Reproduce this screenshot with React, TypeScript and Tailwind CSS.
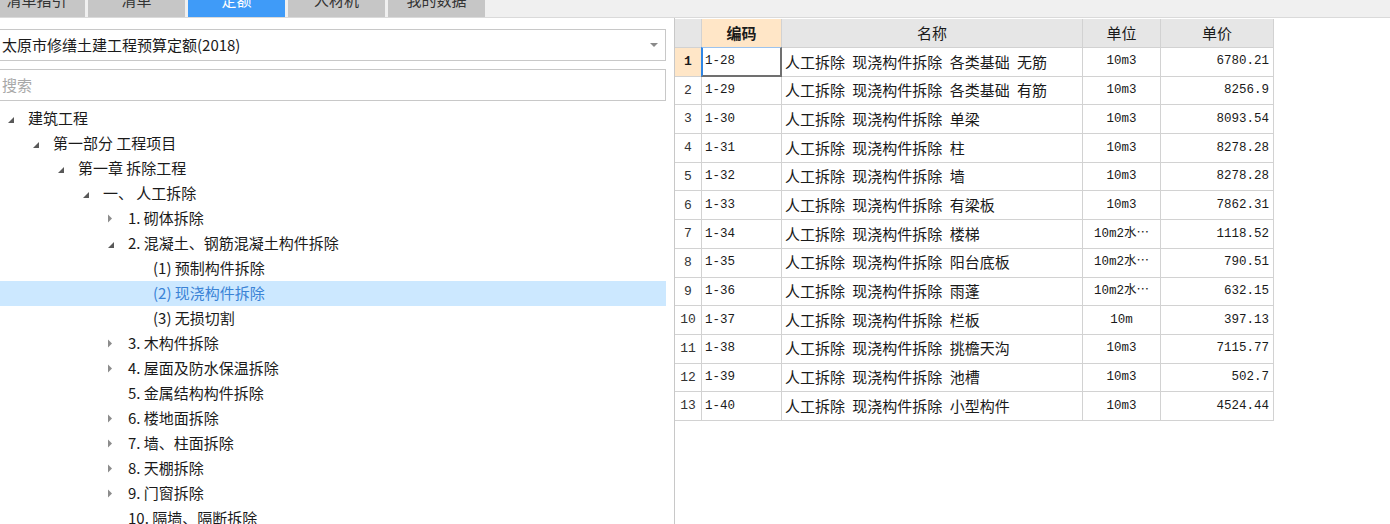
import React from "react";

type Node = { l: number; t: string; s?: "e" | "c"; sel?: boolean };

const tree: Node[] = [
  { l: 0, t: "建筑工程", s: "e" },
  { l: 1, t: "第一部分 工程项目", s: "e" },
  { l: 2, t: "第一章 拆除工程", s: "e" },
  { l: 3, t: "一、 人工拆除", s: "e" },
  { l: 4, t: "1. 砌体拆除", s: "c" },
  { l: 4, t: "2. 混凝土、钢筋混凝土构件拆除", s: "e" },
  { l: 5, t: "(1) 预制构件拆除" },
  { l: 5, t: "(2) 现浇构件拆除", sel: true },
  { l: 5, t: "(3) 无损切割" },
  { l: 4, t: "3. 木构件拆除", s: "c" },
  { l: 4, t: "4. 屋面及防水保温拆除", s: "c" },
  { l: 4, t: "5. 金属结构构件拆除" },
  { l: 4, t: "6. 楼地面拆除", s: "c" },
  { l: 4, t: "7. 墙、柱面拆除", s: "c" },
  { l: 4, t: "8. 天棚拆除", s: "c" },
  { l: 4, t: "9. 门窗拆除", s: "c" },
  { l: 4, t: "10. 隔墙、隔断拆除" },
];

const rows: [string, string, string, string][] = [
  ["1-28", "各类基础 无筋", "10m3", "6780.21"],
  ["1-29", "各类基础 有筋", "10m3", "8256.9"],
  ["1-30", "单梁", "10m3", "8093.54"],
  ["1-31", "柱", "10m3", "8278.28"],
  ["1-32", "墙", "10m3", "8278.28"],
  ["1-33", "有梁板", "10m3", "7862.31"],
  ["1-34", "楼梯", "10m2水⋯", "1118.52"],
  ["1-35", "阳台底板", "10m2水⋯", "790.51"],
  ["1-36", "雨蓬", "10m2水⋯", "632.15"],
  ["1-37", "栏板", "10m", "397.13"],
  ["1-38", "挑檐天沟", "10m3", "7115.77"],
  ["1-39", "池槽", "10m3", "502.7"],
  ["1-40", "小型构件", "10m3", "4524.44"],
];

const cjk = "font-['Microsoft_YaHei','Noto_Sans_CJK_SC',sans-serif]";
const mono = "font-['Liberation_Mono','Noto_Sans_CJK_SC',monospace]";

function Tri({ s }: { s?: "e" | "c" }) {
  if (s === "e")
    return (
      <svg width="8" height="8" viewBox="0 0 8 8" className="absolute left-[7px] top-[11px]">
        <polygon points="7,0 7,6 1,6" fill="#595959" />
      </svg>
    );
  if (s === "c")
    return (
      <svg width="6" height="9" viewBox="0 0 6 9" className="absolute left-[7px] top-[8px]">
        <polygon points="1,0.5 5,4.5 1,8.5" fill="#8c8c8c" />
      </svg>
    );
  return null;
}

const tabs = ["清单指引", "清单", "定额", "人材机", "我的数据"];

export default function App() {
  return (
    <div className={`w-[1390px] h-[524px] overflow-hidden bg-white ${cjk} text-[#1a1a1a]`}>
      {/* tab bar */}
      <div className="h-[18px] bg-[#f0f0f0] border-b border-[#dadada] overflow-hidden flex items-end gap-[3px] pl-0">
        {tabs.map((t, i) => (
          <div
            key={t}
            className={`h-[33px] w-[97px] shrink-0 flex items-center justify-center text-[15px] ${
              i === 0 ? "-ml-[12px]" : ""
            } ${i === 2 ? "bg-[#3f9bf8] text-white" : "bg-[#c6c6c6] text-[#333]"}`}
          >
            {t}
          </div>
        ))}
      </div>

      <div className="flex h-[506px] overflow-hidden">
        {/* left panel */}
        <div className="w-[674px] shrink-0 pt-[11px] flex flex-col">
          <div className="shrink-0 w-[666px] h-[32px] border border-l-0 border-[#c8c8c8] flex items-center justify-between pl-[2px] pr-[7px] text-[15px]">
            <span>太原市修缮土建工程预算定额(2018)</span>
            <svg width="8" height="5" viewBox="0 0 8 5">
              <polygon points="0,0 8,0 4,4" fill="#8a8a8a" />
            </svg>
          </div>
          <div className="shrink-0 mt-[8px] w-[666px] h-[32px] border border-l-0 border-[#c8c8c8] flex items-center pl-[2px] text-[15px] text-[#a8a8a8]">
            搜索
          </div>
          <div className="shrink-0 mt-[5px] w-[666px]">
            {tree.map((n, i) => (
              <div
                key={i}
                className={`h-[25px] flex items-center text-[15px] whitespace-nowrap ${
                  n.sel ? "bg-[#cce8ff] text-[#3a83d6]" : ""
                }`}
              >
                <div style={{ width: 25 * n.l }} className="shrink-0" />
                <div className="relative w-[28px] h-[25px] shrink-0">
                  <Tri s={n.s} />
                </div>
                <span>{n.t}</span>
              </div>
            ))}
          </div>
        </div>

        {/* right panel */}
        <div className="flex-1 border-l border-[#c8c8c8] pt-[1px]">
          <div className="w-[599px] text-[#1a1a1a]">
            {/* header */}
            <div className="flex h-[29px] text-[15px]">
              <div className="w-[27px] bg-[#e6e6e6] border-r border-b border-[#d2d2d2]" />
              <div className="w-[80px] bg-[#ffe6c7] border-r border-b border-[#d2d2d2] flex items-center justify-center font-bold">
                编码
              </div>
              <div className="w-[301px] bg-[#e6e6e6] border-r border-b border-[#d2d2d2] flex items-center justify-center">
                名称
              </div>
              <div className="w-[78px] bg-[#e6e6e6] border-r border-b border-[#d2d2d2] flex items-center justify-center">
                单位
              </div>
              <div className="w-[113px] bg-[#e6e6e6] border-r border-b border-[#d2d2d2] flex items-center justify-center">
                单价
              </div>
            </div>
            {rows.map((r, i) => (
              <div key={i} className="flex h-[28.7px]">
                <div
                  className={`w-[27px] border-r border-b border-[#d2d2d2] flex items-center justify-center text-[13px] ${mono} ${
                    i === 0 ? "bg-[#ffe6c7] font-bold" : "text-[#333]"
                  }`}
                >
                  {i + 1}
                </div>
                <div className={`relative w-[80px] border-r border-b border-[#d2d2d2] flex items-center pl-[3px] text-[12.5px] ${mono}`}>
                  {r[0]}
                  {i === 0 && (
                    <div className="absolute left-[-1px] top-[-1px] right-[-1px] bottom-[-1px] border-l-2 border-t border-r-2 border-b-2 border-l-[#2f86e6] border-t-[#9cc3ee] border-r-[#707070] border-b-[#707070]" />
                  )}
                </div>
                <div className="w-[301px] border-r border-b border-[#d2d2d2] flex items-center pl-[3px] text-[15px] whitespace-nowrap [word-spacing:4px]">
                  人工拆除 现浇构件拆除 {r[1]}
                </div>
                <div className={`w-[78px] border-r border-b border-[#d2d2d2] flex items-center justify-center text-[12.5px] whitespace-nowrap ${mono}`}>
                  {r[2]}
                </div>
                <div className={`w-[113px] border-r border-b border-[#d2d2d2] flex items-center justify-end pr-[4px] text-[12.5px] ${mono}`}>
                  {r[3]}
                </div>
              </div>
            ))}
          </div>
        </div>
      </div>
    </div>
  );
}
